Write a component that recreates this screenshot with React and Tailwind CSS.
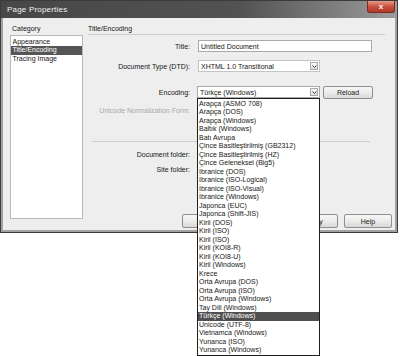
import React from 'react';

const encodings = [
  'Arapça (ASMO 708)',
  'Arapça (DOS)',
  'Arapça (Windows)',
  'Baltık (Windows)',
  'Batı Avrupa',
  'Çince Basitleştirilmiş (GB2312)',
  'Çince Basitleştirilmiş (HZ)',
  'Çince Geleneksel (Big5)',
  'İbranice (DOS)',
  'İbranice (ISO-Logical)',
  'İbranice (ISO-Visual)',
  'İbranice (Windows)',
  'Japonca (EUC)',
  'Japonca (Shift-JIS)',
  'Kiril (DOS)',
  'Kiril (ISO)',
  'Kiril (ISO)',
  'Kiril (KOI8-R)',
  'Kiril (KOI8-U)',
  'Kiril (Windows)',
  'Krece',
  'Orta Avrupa (DOS)',
  'Orta Avrupa (ISO)',
  'Orta Avrupa (Windows)',
  'Tay Dili (Windows)',
  'Türkçe (Windows)',
  'Unicode (UTF-8)',
  'Vietnamca (Windows)',
  'Yunanca (ISO)',
  'Yunanca (Windows)',
];

const categories = ['Appearance', 'Title/Encoding', 'Tracing Image'];

const ArrowButton = () => (
  <span className="my-[1px] mr-[1px] flex w-[8px] items-center justify-center border border-[#a9a9a9] bg-linear-to-b from-[#fbfbfb] to-[#dedede]">
    <svg width="5" height="3" viewBox="0 0 5 3">
      <path d="M0.5 0.5 L2.5 2.5 L4.5 0.5" fill="none" stroke="#3a3a3a" strokeWidth="1" />
    </svg>
  </span>
);

const Btn = ({ children, className = '' }) => (
  <button className={`flex items-center justify-center rounded-[2px] border border-[#8f8f8f] bg-linear-to-b from-[#f7f7f7] via-[#ececec] via-50% to-[#d8d8d8] text-[7px] text-[#1a1a1a] ${className}`}>
    {children}
  </button>
);

const Row = ({ label, disabled, className = '', children }) => (
  <div className={`flex h-[12px] items-center ${className}`}>
    <span className={`w-[102px] shrink-0 text-right ${disabled ? 'text-[#a8a8a8]' : ''}`}>{label}</span>
    {children}
  </div>
);

export default function App() {
  return (
    <div className="relative h-[356px] w-[400px] bg-white font-['Liberation_Sans',Arial,sans-serif] text-[7px] leading-[9px] text-[#161616]">
      <div className="flex h-[233px] w-[398px] flex-col border border-[#3b3b3b] bg-[#a2a2a2]">
        {/* title bar */}
        <div className="flex h-[17px] shrink-0 items-start bg-linear-to-r from-[#474747] via-[#525252] via-60% to-[#9c9c9c]">
          <span className="mt-[4px] ml-[6px] text-[8px] tracking-[0.2px] text-[#f2f2f2]">Page Properties</span>
          <span className="mr-[2px] ml-auto flex h-[12px] w-[28px] items-center justify-center rounded-b-[3px] border border-t-0 border-[#7b2b21] bg-linear-to-b from-[#e59a8c] via-[#c9503d] via-50% to-[#b43a28] text-[8px] font-bold text-white">
            x
          </span>
        </div>

        {/* content */}
        <div className="mx-[2px] mb-[2px] flex h-[212px] bg-[#eeeeee] pt-[5.5px] pr-[3px] pl-[7px]">
          {/* category column */}
          <div className="flex w-[73px] shrink-0 flex-col">
            <div className="h-[9px] pl-[2px]">Category</div>
            <div className="mt-[2.5px] h-[184px] border border-[#b8b8b8] bg-white pt-[1.5px] leading-[8.5px]">
              {categories.map((c) => (
                <div
                  key={c}
                  className={`pl-[1.5px] ${c === 'Title/Encoding' ? 'bg-[#555555] text-white' : ''}`}
                >
                  {c}
                </div>
              ))}
            </div>
          </div>

          {/* settings column */}
          <div className="ml-[5px] flex flex-1 flex-col">
            <div className="h-[9px]">Title/Encoding</div>
            <div className="mt-[1px] mr-[7px] h-px bg-[#cccccc]" />

            <Row label="Title:" className="mt-[5.5px]">
              <div className="ml-[8px] flex h-[12px] w-[174px] items-center border border-[#a9a9a9] bg-white pl-[2px]">
                Untitled Document
              </div>
            </Row>

            <Row label="Document Type (DTD):" className="mt-[8px]">
              <div className="ml-[8px] flex h-[12px] w-[122px] border border-[#c4c4c4] bg-white">
                <span className="flex flex-1 items-center pl-[2px]">XHTML 1.0 Transitional</span>
                <ArrowButton />
              </div>
            </Row>

            <Row label="Encoding:" className="mt-[14px]">
              <div className="relative ml-[7px] flex h-[12px] w-[123px] border border-[#a9a9a9] bg-white">
                <span className="flex flex-1 items-center pl-[2px]">Türkçe (Windows)</span>
                <ArrowButton />
                <div className="absolute top-[11px] left-[-1px] z-10 w-[123px] border border-[#1e1e1e] bg-white pt-[0.5px] leading-[8.5px]">
                  {encodings.map((e, i) => (
                    <div
                      key={i}
                      className={`pl-[1px] whitespace-nowrap ${e === 'Türkçe (Windows)' ? 'bg-[#4f4f4f] text-white' : ''}`}
                    >
                      {e}
                    </div>
                  ))}
                </div>
              </div>
              <Btn className="ml-[3px] h-[13px] w-[50px]">Reload</Btn>
            </Row>

            <Row label="Unicode Normalization Form:" disabled className="mt-[6px]" />

            <div className="mt-[25px] ml-[4px] h-px w-[278px] bg-[#cfcfcf]" />

            <Row label="Document folder:" className="mt-[6px]" />
            <Row label="Site folder:" className="mt-[3px]" />

            <div className="mt-[39px] flex justify-end gap-[6px]">
              <Btn className="h-[14px] w-[48px]">OK</Btn>
              <Btn className="h-[14px] w-[48px]">Cancel</Btn>
              <Btn className="h-[14px] w-[48px]">Apply</Btn>
              <Btn className="h-[14px] w-[48px]">Help</Btn>
            </div>
          </div>
        </div>
      </div>
    </div>
  );
}
